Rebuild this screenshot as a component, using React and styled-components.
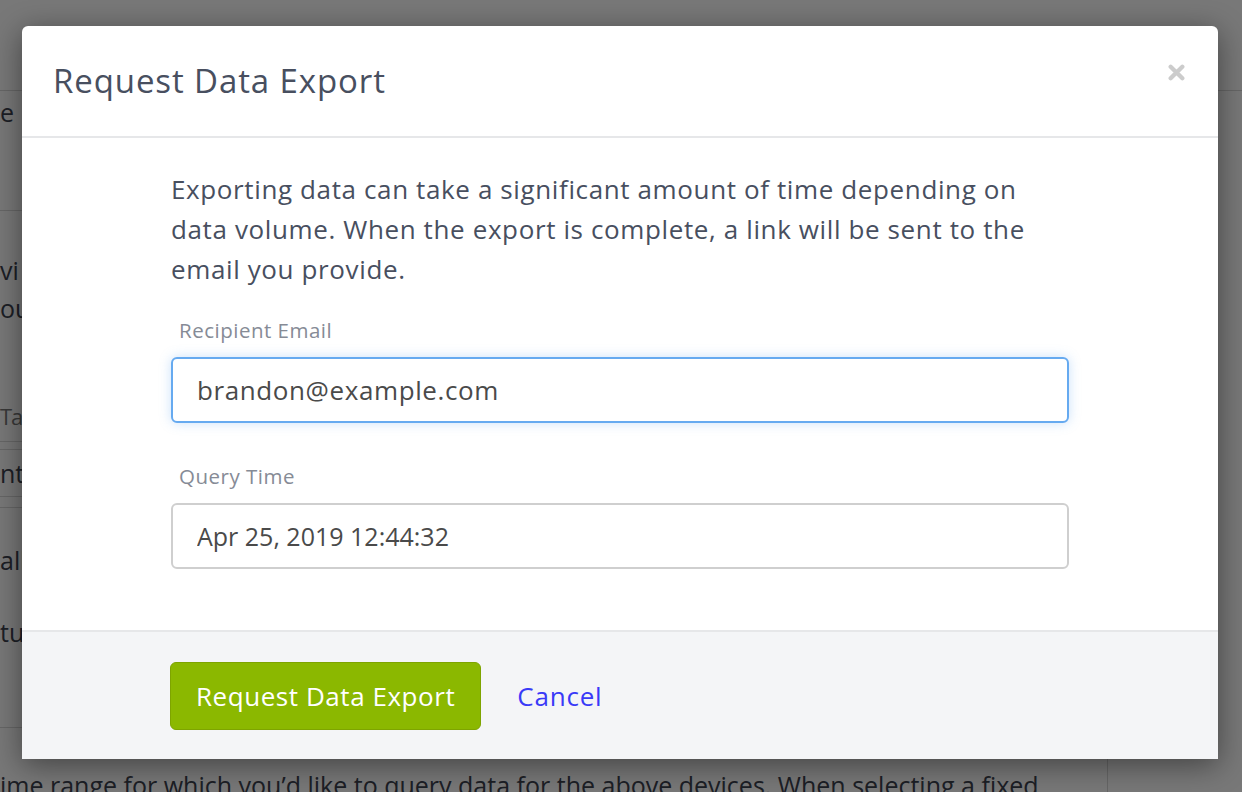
import React from 'react';
import styled, { createGlobalStyle } from 'styled-components';

const Global = createGlobalStyle`
  html, body { margin: 0; padding: 0; }
  body {
    width: 1242px;
    height: 792px;
    overflow: hidden;
    background: #fff;
    font-family: "Open Sans", "Noto Sans", sans-serif;
  }
`;

/* page behind the dialog */
const Page = styled.div`
  position: relative;
  width: 1242px;
  height: 792px;
  overflow: hidden;
  display: flex;
  flex-direction: column;
  color: #3d4250;
`;

const Block = styled.div`
  height: ${p => p.h}px;
  flex-shrink: 0;
  width: ${p => (p.wide ? '100%' : '1108px')};
  border-bottom: ${p => (p.line ? '1px solid #d8d8d8' : 'none')};
  border-right: ${p => (p.divider ? '1px solid #d8d8d8' : 'none')};
  padding-top: ${p => p.pt || 0}px;
  box-sizing: border-box;
  font-size: 25px;
  line-height: 38px;
  white-space: nowrap;
`;

const Faint = styled.span`
  color: #777;
  font-size: 22px;
  letter-spacing: -1px;
`;

const Overlay = styled.div`
  position: absolute;
  inset: 0;
  background: rgba(0, 0, 0, 0.53);
`;

/* dialog */
const Modal = styled.div`
  position: absolute;
  left: 22px;
  top: 26px;
  width: 1196px;
  background: #fff;
  border-radius: 6px 6px 0 0;
  box-shadow: 0 6px 30px rgba(0, 0, 0, 0.45);
  overflow: hidden;
`;

const Header = styled.div`
  height: 112px;
  box-sizing: border-box;
  border-bottom: 2px solid #e6e7e9;
  display: flex;
  align-items: center;
  justify-content: space-between;
  padding: 0 33px 2px 31px;
`;

const Title = styled.h2`
  margin: 0;
  font-size: 33px;
  font-weight: 400;
  color: #484f5f;
  letter-spacing: 0.9px;
`;

const Close = styled.button`
  border: 0;
  background: none;
  padding: 0;
  margin-top: -16px;
  display: flex;
  cursor: pointer;
`;

const Body = styled.div`
  padding: 31px 149px 61px;
`;

const Text = styled.p`
  margin: 0;
  font-size: 26px;
  line-height: 40px;
  color: #484f5f;
  letter-spacing: 0.62px;
`;

const Field = styled.div`
  display: flex;
  flex-direction: column;
  margin-top: ${p => p.gap}px;
`;

const Label = styled.label`
  font-size: 20.5px;
  line-height: 28px;
  color: #868b96;
  letter-spacing: 0.5px;
  padding-left: 8px;
  margin-bottom: 13px;
`;

const Input = styled.input`
  box-sizing: border-box;
  height: 66px;
  width: 100%;
  padding: 0 24px;
  border-radius: 6px;
  font-family: inherit;
  font-size: ${p => p.size}px;
  letter-spacing: ${p => p.spacing}px;
  color: #4a4a4a;
  outline: none;
  background: #fff;
  border: 2px solid ${p => (p.focus ? '#66aaf0' : '#cfcfcf')};
  box-shadow: ${p => (p.focus ? '0 0 12px rgba(102, 170, 240, 0.35)' : 'none')};
`;

const Footer = styled.div`
  background: #f4f5f7;
  border-top: 2px solid #e6e7e9;
  padding: 30px 148px 29px;
  display: flex;
  align-items: center;
  gap: 36px;
`;

const Button = styled.button`
  height: 68px;
  padding: 0 25px;
  border: 1px solid #7ea400;
  border-radius: 6px;
  background: #8bb800;
  color: #fff;
  font-family: inherit;
  font-size: 26px;
  letter-spacing: 0.55px;
  cursor: pointer;
`;

const Cancel = styled.a`
  font-size: 26px;
  letter-spacing: 0.8px;
  color: #3a3af7;
  text-decoration: none;
  cursor: pointer;
`;

export default function App() {
  return (
    <>
      <Global />
      <Page>
        <Block h={91} wide line />
        <Block h={120} line pt={2}>e</Block>
        <Block h={185} pt={40}>vi<br />ou</Block>
        <Block h={46} line pt={0}><Faint>Tag</Faint></Block>
        <Block h={8} line />
        <Block h={47} line pt={4}>nt</Block>
        <Block h={11} line />
        <Block h={90} pt={33}>all</Block>
        <Block h={130} line pt={15}>tu</Block>
        <Block h={70} divider pt={38}>ime range for which you’d like to query data for the above devices. When selecting a fixed</Block>
        <Overlay />
        <Modal>
          <Header>
            <Title>Request Data Export</Title>
            <Close aria-label="Close">
              <svg width="17" height="17" viewBox="0 0 16 16">
                <path d="M2.5 2.5 L13.5 13.5 M13.5 2.5 L2.5 13.5" stroke="#cccccc" strokeWidth="4" strokeLinecap="round" />
              </svg>
            </Close>
          </Header>
          <Body>
            <Text>
              Exporting data can take a significant amount of time depending on data volume. When the export is complete, a link will be sent to the email you provide.
            </Text>
            <Field gap={27}>
              <Label>Recipient Email</Label>
              <Input focus size={26} spacing={0.6} defaultValue="brandon@example.com" />
            </Field>
            <Field gap={39}>
              <Label>Query Time</Label>
              <Input size={25} spacing={0} defaultValue="Apr 25, 2019 12:44:32" />
            </Field>
          </Body>
          <Footer>
            <Button>Request Data Export</Button>
            <Cancel>Cancel</Cancel>
          </Footer>
        </Modal>
      </Page>
    </>
  );
}
